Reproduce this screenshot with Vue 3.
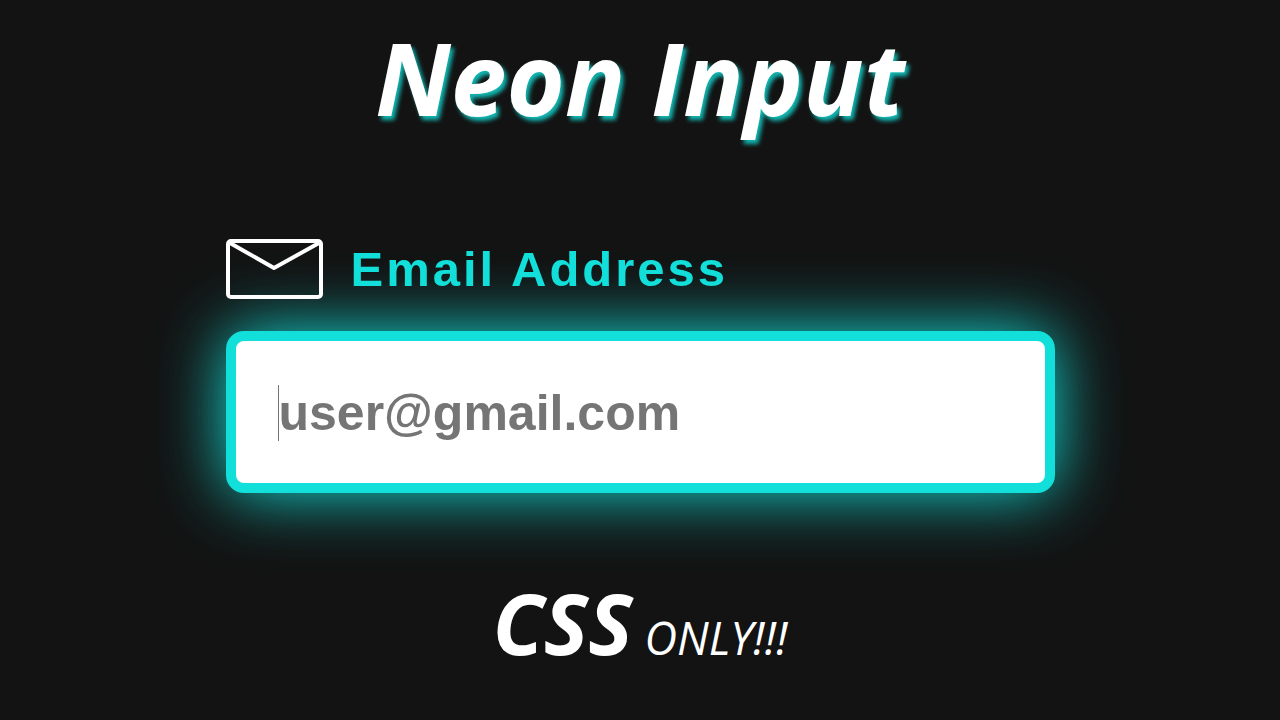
<script setup>
import { ref } from 'vue'

const email = ref('')
</script>

<template>
  <main class="page">
    <h1 class="title">Neon Input</h1>

    <form class="field" @submit.prevent>
      <label class="field-label" for="email">
        <svg class="envelope" viewBox="0 0 97 60" fill="none" aria-hidden="true">
          <rect x="2" y="2" width="93" height="56" rx="3" />
          <path d="M4 4 L48 29 L93 4" />
        </svg>
        <span>Email Address</span>
      </label>
      <div class="field-box">
        <input id="email" v-model="email" class="field-input" type="email" placeholder="user@gmail.com" />
        <span v-if="!email" class="caret" aria-hidden="true"></span>
      </div>
    </form>

    <p class="tagline"><strong>CSS</strong> <span>ONLY!!!</span></p>
  </main>
</template>

<style>
body {
  background: #131313;
}
</style>

<style scoped>
.page {
  box-sizing: border-box;
  min-height: 100vh;
  padding: 17px 24px 24px;
  display: flex;
  flex-direction: column;
  align-items: center;
  background: #131313;
  color: #fff;
}

.title {
  margin: 0;
  font: italic 700 100px/120px "Segoe Print", "Ink Free", "Open Sans", sans-serif;
  text-shadow: 3px 4px 4px #12b8b3;
}

.field {
  width: 100%;
  max-width: 829px;
  margin-top: 102px;
}

.field-label {
  position: relative;
  z-index: 1;
  display: flex;
  align-items: center;
  gap: 28px;
  color: #12dfd9;
  font: 700 49px/60px "Liberation Sans", Arial, sans-serif;
  letter-spacing: 3px;
}

.envelope {
  width: 97px;
  height: 60px;
  stroke: #fff;
  stroke-width: 4;
  stroke-linecap: round;
  stroke-linejoin: round;
}

.field-box {
  position: relative;
  margin-top: 32px;
}

.field-input {
  display: block;
  box-sizing: border-box;
  width: 100%;
  height: 162px;
  padding: 2px 43px 0;
  border: 10px solid #12dfd9;
  border-radius: 18px;
  outline: none;
  background: #fff;
  box-shadow: 0 0 66px #12dfd9;
  color: #757575;
  font: 700 50px/60px "Liberation Sans", Arial, sans-serif;
}

.field-input::placeholder {
  color: #757575;
  opacity: 1;
}

.caret {
  position: absolute;
  top: 54px;
  left: 52px;
  width: 1px;
  height: 56px;
  background: #757575;
}

.tagline {
  margin: 80px 0 0;
  font: italic 400 45px/100px "Segoe Print", "Ink Free", "Open Sans", sans-serif;
}

.tagline strong {
  font-size: 84px;
  font-weight: 700;
}
</style>
